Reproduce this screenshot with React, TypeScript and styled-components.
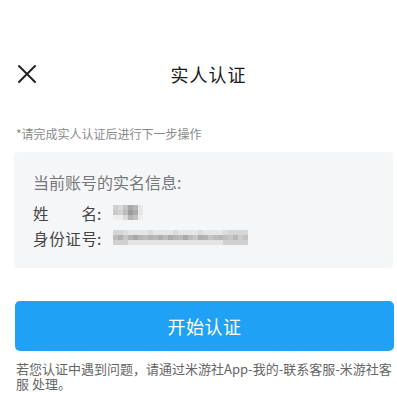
import React from 'react';
import styled, { createGlobalStyle } from 'styled-components';

const GlobalStyle = createGlobalStyle`
  html, body {
    margin: 0;
    padding: 0;
    background: #ffffff;
  }
  body {
    font-family: "Noto Sans CJK SC", "Noto Sans", sans-serif;
  }
`;

const Page = styled.div`
  width: 397px;
  min-height: 415px;
  box-sizing: border-box;
  padding: 52px 4px 0 14px;
`;

const Header = styled.header`
  display: grid;
  grid-template-columns: 40px 1fr 40px;
  align-items: center;
  height: 44px;
`;

const CloseButton = styled.button`
  display: flex;
  align-items: center;
  justify-content: flex-start;
  padding: 0 0 0 3px;
  border: 0;
  background: none;
  cursor: pointer;
`;

const Title = styled.h1`
  margin: 0;
  padding-left: 10px;
  text-align: center;
  font-size: 18px;
  font-weight: 400;
  color: #1a1a1a;
  letter-spacing: 1px;
`;

const Hint = styled.p`
  margin: 30px 0 0 2px;
  font-size: 12px;
  line-height: 16px;
  color: #8a8a8a;
`;

const InfoCard = styled.section`
  margin-top: 10px;
  height: 116px;
  box-sizing: border-box;
  padding: 19px 19px 0;
  background: #f5f6f7;
  border-radius: 4px;
`;

const InfoHeading = styled.div`
  font-size: 16px;
  line-height: 22px;
  color: #777;
  margin-bottom: 7px;
`;

const InfoRow = styled.div`
  display: flex;
  align-items: center;
  height: 25px;
  font-size: 15.5px;
  color: #444;
`;

const Label = styled.span`
  width: 64px;
  text-align: justify;
  text-align-last: justify;
`;

const Colon = styled.span`
  width: 16px;
`;

const Mosaic = styled.span<{ $cols: number }>`
  display: grid;
  grid-template-columns: repeat(${p => p.$cols}, 5px);
  grid-auto-rows: 5px;
`;

const Cell = styled.span`
  display: block;
`;

const StartButton = styled.button`
  display: block;
  width: 379px;
  height: 50px;
  margin: 33px 0 0 1px;
  border: 0;
  border-radius: 5px;
  background: #1fa1f6;
  color: #fff;
  font-family: inherit;
  font-size: 18px;
  letter-spacing: 0.5px;
  cursor: pointer;
`;

const Footer = styled.p`
  margin: 10px 0 0 2px;
  width: 380px;
  font-size: 13px;
  line-height: 15px;
  color: #666;
`;

const nameShades = [
  ['#cfcfcf', '#d8d8d8', '#c4c4c4', '#a8a8a8', '#b8b8b8', '#e8e8e8'],
  ['#c8c8c8', '#d2d2d2', '#bcbcbc', '#9c9c9c', '#acacac', '#e6e6e6'],
  ['#eeeeee', '#eeeeee', '#dadada', '#b4b4b4', '#c2c2c2', '#eeeeee'],
];

const idMid = [
  '#bdbdbd', '#b0b0b0', '#c6c6c6', '#b4b4b4', '#a8a8a8', '#b6b6b6', '#bcbcbc', '#b2b2b2', '#b8b8b8',
  '#aeaeae', '#bbbbbb', '#acacac', '#b5b5b5', '#bababa', '#a9a9a9', '#bdbdbd', '#c8c8c8', '#b0b0b0',
  '#b3b3b3', '#c4c4c4', '#bcbcbc', '#b8b8b8', '#c0c0c0', '#c6c6c6', '#b8b8b8', '#cccccc', '#c2c2c2',
];

const idRows = [
  idMid.map((_, i) => (i === 0 || i === 1 || i > 22 ? '#d6d6d6' : i % 5 === 2 ? '#dcdcdc' : '#e6e6e6')),
  idMid,
  idMid.map((_, i) => (i < 3 || i > 21 ? '#d0d0d0' : '#e4e4e4')),
];

const Blurred: React.FC<{ rows: string[][] }> = ({ rows }) => (
  <Mosaic $cols={rows[0].length}>
    {rows.flat().map((c, i) => (
      <Cell key={i} style={{ background: c }} />
    ))}
  </Mosaic>
);

const CloseIcon = () => (
  <svg width="20" height="20" viewBox="0 0 20 20">
    <path d="M2 2 L18 18 M18 2 L2 18" stroke="#222" strokeWidth="2" strokeLinecap="round" />
  </svg>
);

const App: React.FC = () => (
  <>
    <GlobalStyle />
    <Page>
      <Header>
        <CloseButton aria-label="关闭">
          <CloseIcon />
        </CloseButton>
        <Title>实人认证</Title>
        <span />
      </Header>
      <Hint>*请完成实人认证后进行下一步操作</Hint>
      <InfoCard>
        <InfoHeading>当前账号的实名信息:</InfoHeading>
        <InfoRow>
          <Label>姓名</Label>
          <Colon>:</Colon>
          <Blurred rows={nameShades} />
        </InfoRow>
        <InfoRow>
          <Label>身份证号</Label>
          <Colon>:</Colon>
          <Blurred rows={idRows} />
        </InfoRow>
      </InfoCard>
      <StartButton>开始认证</StartButton>
      <Footer>若您认证中遇到问题，请通过米游社App-我的-联系客服-米游社客服 处理。</Footer>
    </Page>
  </>
);

export default App;
